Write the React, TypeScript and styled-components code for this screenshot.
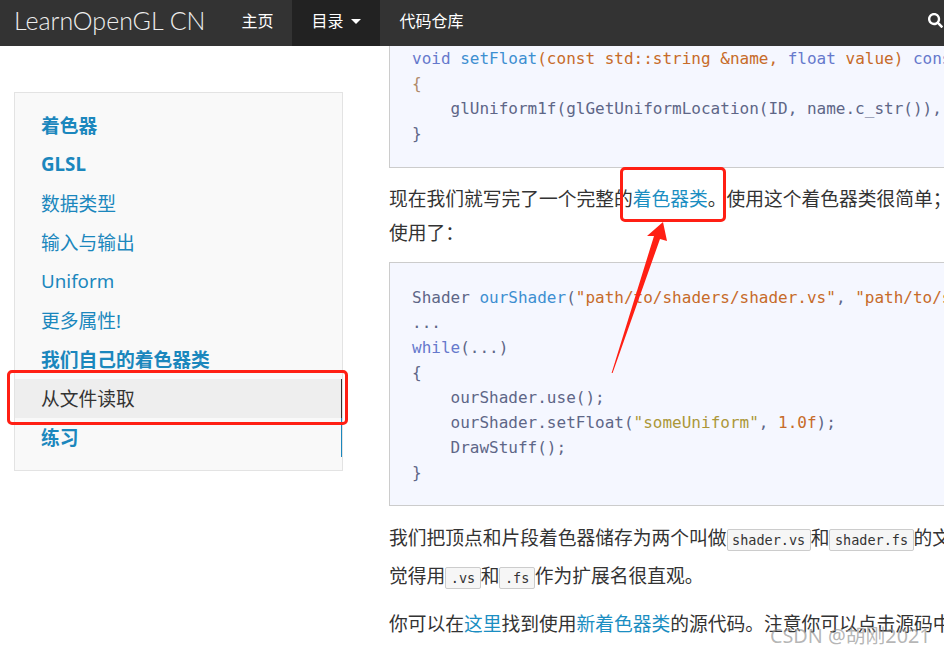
import React from 'react';
import styled, { createGlobalStyle } from 'styled-components';
import { FaSearch } from 'react-icons/fa';

const GlobalStyle = createGlobalStyle`
  html, body {
    margin: 0;
    padding: 0;
    background: #fff;
    overflow: hidden;
  }
  body {
    font-family: "Noto Sans", "Noto Sans CJK SC", sans-serif;
    color: #333;
  }
  ul {
    margin: 0;
    padding: 0;
    list-style: none;
  }
`;

const Page = styled.div`
  position: relative;
  width: 944px;
  height: 656px;
  overflow: hidden;
`;

const Navbar = styled.nav`
  height: 46px;
  background: #333;
  display: flex;
  align-items: stretch;
  padding-left: 14px;
`;

const Brand = styled.a`
  display: flex;
  align-items: center;
  padding-bottom: 6px;
  margin-right: 17px;
  font-family: Lato, "Open Sans", sans-serif;
  font-weight: 300;
  font-size: 25px;
  color: #eee;
  white-space: nowrap;
`;

const NavItem = styled.a<{ $active?: boolean }>`
  display: flex;
  align-items: center;
  gap: 8px;
  padding: 0 19px 6px;
  font-family: "Noto Sans CJK SC", sans-serif;
  font-size: 16px;
  color: #fff;
  background: ${p => (p.$active ? '#222' : 'transparent')};
`;

const Caret = styled.span`
  width: 0;
  height: 0;
  margin-top: 2px;
  border-left: 5px solid transparent;
  border-right: 5px solid transparent;
  border-top: 5px solid #fff;
`;

const SearchBtn = styled.div`
  margin-left: auto;
  display: flex;
  align-items: center;
  padding: 0 1px 6px 0;
  color: #fff;
`;

const Main = styled.div`
  display: flex;
  align-items: flex-start;
  gap: 46px;
  padding-left: 14px;
`;

const Sidebar = styled.ul`
  flex: none;
  box-sizing: border-box;
  width: 329px;
  margin-top: 46px !important;
  padding: 13px 0 !important;
  background: #f9f9f9;
  border: 1px solid #e3e3e3;
`;

const SideItem = styled.li<{ $bold?: boolean; $current?: boolean; $edge?: boolean }>`
  height: 39px;
  display: flex;
  align-items: center;
  padding-left: 26px;
  padding-bottom: 2px;
  box-sizing: border-box;
  font-size: 18.75px;
  font-weight: ${p => (p.$bold ? 700 : 400)};
  color: ${p => (p.$current ? '#333' : '#1b87bd')};
  background: ${p => (p.$current ? '#eee' : 'transparent')};
  border-right: 1px solid ${p => (p.$edge ? 'currentColor' : 'transparent')};
`;

const Content = styled.div`
  flex: none;
  width: 960px;
`;

const CodeBlock = styled.pre<{ $clipped?: boolean }>`
  margin: 0;
  padding: ${p => (p.$clipped ? '0 22px 21px' : '22px 22px 20px')};
  background: #f5f7ff;
  border: 1px solid #ccc;
  border-top: ${p => (p.$clipped ? 'none' : '1px solid #ccc')};
  font-family: "DejaVu Sans Mono", "Liberation Mono", monospace;
  font-size: 16px;
  line-height: 25px;
  color: #5e6687;
  white-space: pre;
  overflow: hidden;
`;

const tokenColors = {
  kw: '#6679cc',
  fn: '#3d8fd1',
  param: '#c76b29',
  brace: '#b08a6a',
  str: '#ac9739',
  num: '#c76b29',
};

const Tok = styled.span<{ $k: keyof typeof tokenColors }>`
  color: ${p => tokenColors[p.$k]};
`;

const Para = styled.p<{ $tall?: boolean; $gap?: number }>`
  margin: ${p => p.$gap ?? 12}px 0 ${p => (p.$gap ? 13 : 0)}px;
  font-family: "Noto Sans CJK SC", sans-serif;
  font-size: 18.75px;
  line-height: ${p => (p.$tall ? 38 : 34)}px;
  color: #333;
  white-space: nowrap;
`;

const Link = styled.a`
  color: #1b8ec2;
  text-decoration: none;
`;

const InlineCode = styled.code`
  padding: 2px 4.5px;
  font-family: "DejaVu Sans Mono", "Liberation Mono", monospace;
  font-size: 13.5px;
  line-height: 18px;
  color: #333;
  background: #f6f6f6;
  border: 1px solid #ccc;
  border-radius: 2px;
`;

const Mark = styled.div<{ $x: number; $y: number; $w: number; $h: number }>`
  position: absolute;
  left: ${p => p.$x}px;
  top: ${p => p.$y}px;
  width: ${p => p.$w}px;
  height: ${p => p.$h}px;
  box-sizing: border-box;
  border: 3px solid #ff1f14;
  border-radius: 5px;
  pointer-events: none;
`;

const Arrow = styled.svg`
  position: absolute;
  left: 0;
  top: 0;
  pointer-events: none;
`;

const Watermark = styled.div`
  position: absolute;
  left: 770px;
  top: 623px;
  font-family: "Noto Sans", "Noto Sans CJK SC", sans-serif;
  font-size: 19.8px;
  line-height: 26px;
  color: rgba(150, 150, 150, 0.7);
  white-space: nowrap;
`;

export default function App() {
  return (
    <Page>
      <GlobalStyle />
      <Navbar>
        <Brand>LearnOpenGL CN</Brand>
        <NavItem>主页</NavItem>
        <NavItem $active>
          目录 <Caret />
        </NavItem>
        <NavItem>代码仓库</NavItem>
        <SearchBtn>
          <FaSearch size={15} />
        </SearchBtn>
      </Navbar>

      <Main>
        <Sidebar>
          <SideItem $bold>着色器</SideItem>
          <SideItem $bold>GLSL</SideItem>
          <SideItem>数据类型</SideItem>
          <SideItem>输入与输出</SideItem>
          <SideItem>Uniform</SideItem>
          <SideItem>更多属性!</SideItem>
          <SideItem $bold>我们自己的着色器类</SideItem>
          <SideItem $current $edge>从文件读取</SideItem>
          <SideItem $bold $edge>练习</SideItem>
        </Sidebar>

        <Content>
          <CodeBlock $clipped>
            <Tok $k="kw">void</Tok> <Tok $k="fn">setFloat</Tok>
            <Tok $k="param">(const std::string &amp;name, </Tok>
            <Tok $k="kw">float</Tok>
            <Tok $k="param"> value)</Tok> <Tok $k="kw">const</Tok>
            {'\n'}
            <Tok $k="brace">{'{'}</Tok>
            {'\n    glUniform1f(glGetUniformLocation(ID, name.c_str()), value);\n}'}
          </CodeBlock>

          <Para $gap={13}>
            现在我们就写完了一个完整的<Link>着色器类</Link>。使用这个着色器类很简单；只要创建一个着色器对象，从那一点开始我们就可以开始
            <br />
            使用了：
          </Para>

          <CodeBlock>
            {'Shader '}
            <Tok $k="fn">ourShader</Tok>(
            <Tok $k="param">"path/to/shaders/shader.vs"</Tok>,{' '}
            <Tok $k="param">"path/to/shaders/shader.fs"</Tok>);
            {'\n...\n'}
            <Tok $k="kw">while</Tok>
            {'(...)\n{\n    ourShader.use();\n    ourShader.setFloat('}
            <Tok $k="str">"someUniform"</Tok>, <Tok $k="num">1.0f</Tok>
            {');\n    DrawStuff();\n}'}
          </CodeBlock>

          <Para $tall>
            我们把顶点和片段着色器储存为两个叫做<InlineCode>shader.vs</InlineCode>和
            <InlineCode>shader.fs</InlineCode>的文件。你可以使用自己喜欢的名字命名着色器文件；我自己
            <br />
            觉得用<InlineCode>.vs</InlineCode>和<InlineCode>.fs</InlineCode>作为扩展名很直观。
          </Para>

          <Para>
            你可以在<Link>这里</Link>找到使用<Link>新着色器类</Link>的源代码。注意你可以点击源码中的Shader、顶点和片段着色器文件名来查看每一部分的源码。
          </Para>
        </Content>
      </Main>

      <Mark $x={7} $y={370} $w={341} $h={55} />
      <Mark $x={620} $y={167} $w={106} $h={55} />

      <Arrow width="944" height="656" viewBox="0 0 944 656">
        <polygon
          points="663,222 667,241 660,239 612.6,373 611.6,373 654,236 647,236"
          fill="#ff1f14"
        />
      </Arrow>

      <Watermark>CSDN @胡刚2021</Watermark>
    </Page>
  );
}
